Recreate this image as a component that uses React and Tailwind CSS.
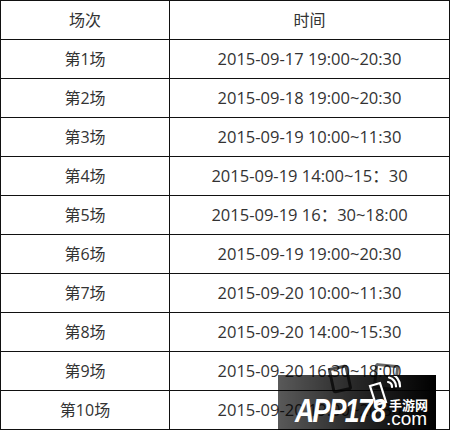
import React from "react";

// Session schedule rows
const rows = [
  ["第1场", "2015-09-17 19:00~20:30"],
  ["第2场", "2015-09-18 19:00~20:30"],
  ["第3场", "2015-09-19 10:00~11:30"],
  ["第4场", "2015-09-19 14:00~15：30"],
  ["第5场", "2015-09-19 16：30~18:00"],
  ["第6场", "2015-09-19 19:00~20:30"],
  ["第7场", "2015-09-20 10:00~11:30"],
  ["第8场", "2015-09-20 14:00~15:30"],
  ["第9场", "2015-09-20 16:30~18:00"],
  ["第10场", "2015-09-20 19:00~20:30"],
];

const font = { fontFamily: '"Open Sans", "Noto Sans CJK SC", sans-serif' };

function Cell({ children, big }) {
  return (
    <div
      className={`flex h-[39px] items-center justify-center border-r border-b border-[#111] text-[#333] ${
        big ? "text-[16.5px]" : "text-[16px]"
      }`}
    >
      {children}
    </div>
  );
}

// APP178 watermark in the lower right corner
function Watermark() {
  return (
    <div className="pointer-events-none absolute left-[278px] top-[362px] h-[68px] w-[158px]">
      {/* faded phone shapes behind the box */}
      <div className="absolute left-[52px] top-[4px] h-[26px] w-[20px] -rotate-12 rounded-[3px] border-[3px] border-black/70" />
      <div className="absolute left-[96px] top-[2px] h-[26px] w-[24px] rotate-6 rounded-[3px] border-[3px] border-black/60" />
      <div className="absolute bottom-0 left-0 flex h-[55px] w-[158px] items-end bg-gradient-to-r from-black/65 via-black/85 to-black pb-[3px] pl-[17px]">
        <div
          className="w-[94px] text-[34px] font-bold italic leading-none tracking-[-2px] text-white"
          style={{ fontFamily: '"Liberation Sans", Arial, sans-serif', transform: "scaleX(0.78)", transformOrigin: "left" }}
        >
          APP178
        </div>
        <div className="flex flex-col items-start leading-none text-white">
          <span className="text-[13px] font-bold" style={{ fontFamily: '"Noto Sans CJK SC", sans-serif' }}>
            手游网
          </span>
          <span className="-ml-[3px] text-[19px] leading-[16px]" style={{ fontFamily: '"Liberation Sans", Arial, sans-serif' }}>
            .com
          </span>
        </div>
      </div>
      {/* phone icon */}
      <svg className="absolute left-[86px] top-[14px]" width="40" height="32" viewBox="0 0 40 32">
        <g fill="none" stroke="#fff" strokeWidth="2.2" strokeLinecap="round">
          <path d="M6 10 L16 7 L22 26 L12 29 Z" />
          <path d="M24 6 a5 5 0 0 1 4 5" />
          <path d="M25 1.5 a9 9 0 0 1 7 9" />
          <path d="M26 -2.5 a13 13 0 0 1 10 13" />
        </g>
      </svg>
    </div>
  );
}

export default function App() {
  return (
    <div className="relative h-[430px] w-[450px] overflow-hidden bg-white" style={font}>
      <div className="grid w-[450px] grid-cols-[169px_280px] border-t border-l border-[#111]">
        <Cell>场次</Cell>
        <Cell>时间</Cell>
        {rows.map(([name, time]) => (
          <React.Fragment key={name}>
            <Cell>{name}</Cell>
            <Cell big>{time}</Cell>
          </React.Fragment>
        ))}
      </div>
      <Watermark />
    </div>
  );
}
